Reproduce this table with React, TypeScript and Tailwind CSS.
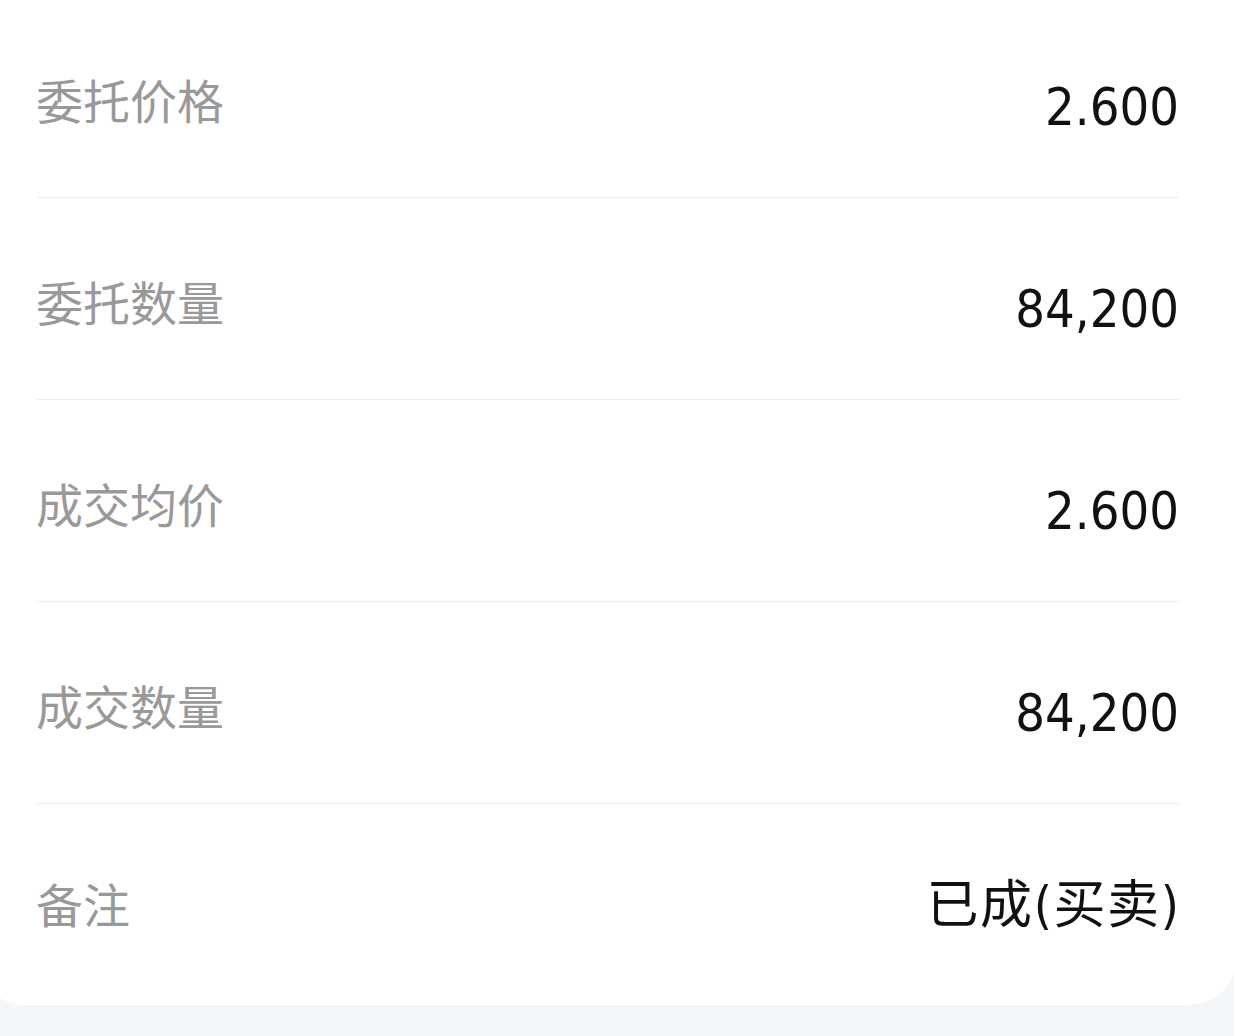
import React from "react";

const rows = [
  { label: "委托价格", value: "2.600" },
  { label: "委托数量", value: "84,200" },
  { label: "成交均价", value: "2.600" },
  { label: "成交数量", value: "84,200" },
];

const labelFont = {
  fontFamily: '"Noto Sans CJK SC", "Noto Sans", sans-serif',
};

export default function App() {
  return (
    <div className="w-[1234px] h-[1036px] bg-[#f4f7fa] overflow-hidden">
      <div className="ml-[-23px] mt-[-4px] w-[1260px] bg-white rounded-b-[48px] pl-[60px] pr-[58px]">
        {rows.map((r) => (
          <div
            key={r.label}
            className="h-[202px] border-b border-[#eeeeee] flex items-center justify-between pt-[10px]"
          >
            <span
              className="text-[47px] leading-none text-[#999999] mb-[6px] -ml-[1px]"
              style={labelFont}
            >
              {r.label}
            </span>
            <span className="text-[52px] leading-none text-[#111111] mt-[10px] font-stretch-condensed [font-family:'DejaVu_Sans_Condensed','DejaVu_Sans','Noto_Sans_CJK_SC',sans-serif]">
              {r.value}
            </span>
          </div>
        ))}
        <div className="h-[201px] flex items-center justify-between">
          <span
            className="text-[47px] leading-none text-[#999999] mb-[4px] -ml-[1px]"
            style={labelFont}
          >
            备注
          </span>
          <span className="text-[52px] leading-none text-[#111111] tracking-[1.6px] -mr-[1.6px] font-stretch-condensed [font-family:'DejaVu_Sans_Condensed','DejaVu_Sans','Noto_Sans_CJK_SC',sans-serif]">
            已成(买卖)
          </span>
        </div>
      </div>
    </div>
  );
}
